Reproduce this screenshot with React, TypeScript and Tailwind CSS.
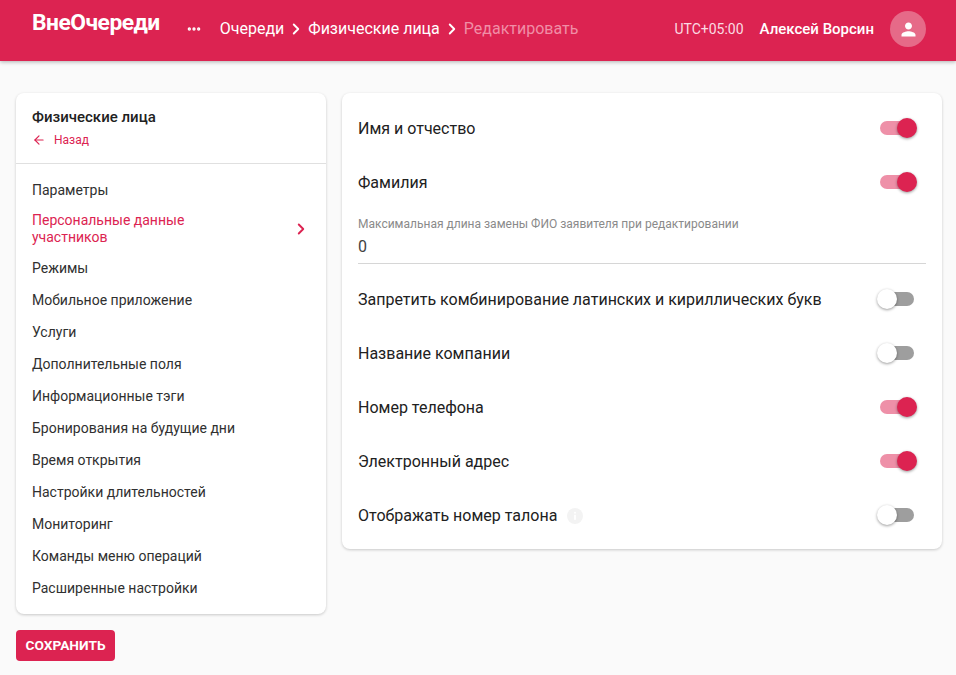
import { ArrowLeft, ChevronRight, MoreHorizontal } from 'lucide-react';

// sidebar links
const menu = [
  'Параметры',
  'Персональные данные участников',
  'Режимы',
  'Мобильное приложение',
  'Услуги',
  'Дополнительные поля',
  'Информационные тэги',
  'Бронирования на будущие дни',
  'Время открытия',
  'Настройки длительностей',
  'Мониторинг',
  'Команды меню операций',
  'Расширенные настройки',
];

function Toggle({ on }: { on: boolean }) {
  return (
    <div className="relative w-[34px] h-[14px] mr-[12px]">
      <div className={`w-full h-full rounded-full ${on ? 'bg-[#ee90a8]' : 'bg-[#9e9e9e]'}`} />
      <div
        className={`absolute top-[-3px] w-5 h-5 rounded-full shadow-[0_1px_3px_rgba(0,0,0,0.4)] ${
          on ? 'right-[-3px] bg-[#dc2351]' : 'left-[-3px] bg-white'
        }`}
      />
    </div>
  );
}

function Row({ label, on, info }: { label: string; on: boolean; info?: boolean }) {
  return (
    <div className="flex items-center justify-between h-[54px]">
      <div className="flex items-center pt-[2px] text-base text-[#212121]">
        {label}
        {info && (
          <svg viewBox="0 0 16 16" className="ml-[10px] w-4 h-4">
            <circle cx="8" cy="8" r="8" fill="#f3f3f3" />
            <circle cx="8" cy="4.8" r="1" fill="#ffffff" />
            <rect x="7.1" y="6.8" width="1.8" height="5" fill="#ffffff" />
          </svg>
        )}
      </div>
      <Toggle on={on} />
    </div>
  );
}

function Header() {
  return (
    <div className="h-[61px] bg-[#dc2351] shadow-[0_1px_4px_rgba(0,0,0,0.3)] flex items-start text-white relative">
      <div className="ml-8 mt-[8px] text-[22.8px] leading-[30px] font-bold tracking-[-0.5px]">ВнеОчереди</div>
      <MoreHorizontal size={16} strokeWidth={3} className="ml-[26px] mt-[21px]" />
      <div className="ml-[18px] mt-[18px] flex items-center text-base leading-[22px]">
        <span>Очереди</span>
        <ChevronRight size={18} strokeWidth={2.5} className="mx-[3px]" />
        <span>Физические лица</span>
        <ChevronRight size={18} strokeWidth={2.5} className="mx-[3px]" />
        <span className="text-[#f08ea6]">Редактировать</span>
      </div>
      <div className="ml-auto mr-[30px] mt-[11px] flex items-center">
        <span className="text-sm text-[#fbdbe3]">UTC+05:00</span>
        <span className="ml-4 text-[15px] font-medium">Алексей Ворсин</span>
        <div className="ml-4 w-9 h-9 rounded-full bg-[#e66a88] flex items-center justify-center">
          <svg viewBox="0 0 24 24" width="21" height="21" fill="white">
            <path d="M12 12c2.21 0 4-1.79 4-4s-1.79-4-4-4-4 1.79-4 4 1.79 4 4 4zm0 2c-2.67 0-8 1.34-8 4v2h16v-2c0-2.66-5.33-4-8-4z" />
          </svg>
        </div>
      </div>
    </div>
  );
}

function Sidebar() {
  return (
    <div className="w-[310px] shrink-0">
      <div className="bg-white rounded-lg shadow-[0_1px_3px_rgba(0,0,0,0.2)] pb-[10px]">
        <div className="h-[71px] border-b border-[#e0e0e0] px-4 pt-[14px]">
          <div className="text-[15px] leading-5 font-medium text-[#212121]">Физические лица</div>
          <div className="mt-[4px] flex items-center text-xs leading-[18px] text-[#dc2351]">
            <ArrowLeft size={14} />
            <span className="ml-2">Назад</span>
          </div>
        </div>
        <div className="pt-[10px]">
          {menu.map((m, i) =>
            i === 1 ? (
              <div key={m} className="flex items-center justify-between pl-4 pr-4 py-[6px] text-sm leading-[17px] text-[#dc2351]">
                <span className="w-[200px]">{m}</span>
                <ChevronRight size={18} strokeWidth={2.5} />
              </div>
            ) : (
              <div key={m} className="h-8 flex items-center px-4 text-sm text-[#303030]">
                {m}
              </div>
            )
          )}
        </div>
      </div>
      <button className="mt-4 h-[31px] w-[99px] rounded bg-[#dc2351] text-white text-[13.7px] font-bold">СОХРАНИТЬ</button>
    </div>
  );
}

function Settings() {
  return (
    <div className="flex-1 self-start bg-white rounded-lg shadow-[0_1px_3px_rgba(0,0,0,0.2)] px-4 pt-2 pb-[7px]">
      <Row label="Имя и отчество" on />
      <Row label="Фамилия" on />
      <div className="h-[55px] border-b border-[#d6d6d6] pt-[6px]">
        <div className="text-xs leading-[18px] text-[#8a8a8a]">
          Максимальная длина замены ФИО заявителя при редактировании
        </div>
        <div className="mt-[2px] text-base leading-6 text-[#424242]">0</div>
      </div>
      <div className="mt-2">
        <Row label="Запретить комбинирование латинских и кириллических букв" on={false} />
        <Row label="Название компании" on={false} />
        <Row label="Номер телефона" on />
        <Row label="Электронный адрес" on />
        <Row label="Отображать номер талона" on={false} info />
      </div>
    </div>
  );
}

export default function App() {
  return (
    <div className="min-h-screen bg-[#fafafa] font-['Roboto',sans-serif]">
      <Header />
      <div className="flex gap-4 pt-8 pl-4 pr-[14px]">
        <Sidebar />
        <Settings />
      </div>
    </div>
  );
}
